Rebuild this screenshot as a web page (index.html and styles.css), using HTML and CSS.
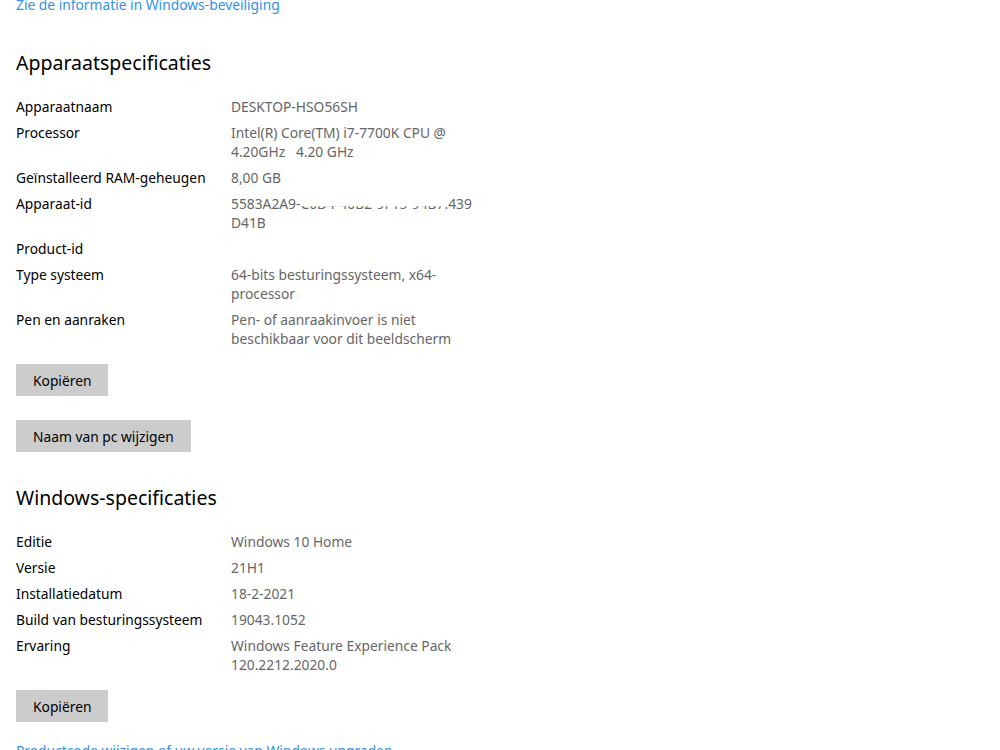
FILE: index.html
```html
<!DOCTYPE html>
<html lang="nl">
<head>
    <meta charset="UTF-8">
    <title>Info</title>
    <link rel="stylesheet" href="styles.css">
</head>
<body>
    <div class="page">
        <a class="link" href="#">Zie de informatie in Windows-beveiliging</a>

        <h2>Apparaatspecificaties</h2>
        <div class="specs">
            <div class="label">Apparaatnaam</div>
            <div class="value">DESKTOP-HSO56SH</div>
            <div class="label">Processor</div>
            <div class="value">Intel(R) Core(TM) i7-7700K CPU @<br>4.20GHz&nbsp;&nbsp;&nbsp;4.20 GHz</div>
            <div class="label">Geïnstalleerd RAM-geheugen</div>
            <div class="value">8,00 GB</div>
            <div class="label">Apparaat-id</div>
            <div class="value">5583A2A9-<span class="hidden">C0D4-40B2-9F15-94B7</span>.439<br>D41B</div>
            <div class="label">Product-id</div>
            <div class="value"><span class="hidden gone">00330-80000-00000-AA622</span></div>
            <div class="label">Type systeem</div>
            <div class="value">64-bits besturingssysteem, x64-<br>processor</div>
            <div class="label">Pen en aanraken</div>
            <div class="value">Pen- of aanraakinvoer is niet<br>beschikbaar voor dit beeldscherm</div>
        </div>
        <button class="btn">Kopiëren</button>
        <button class="btn">Naam van pc wijzigen</button>

        <h2>Windows-specificaties</h2>
        <div class="specs">
            <div class="label">Editie</div>
            <div class="value">Windows 10 Home</div>
            <div class="label">Versie</div>
            <div class="value">21H1</div>
            <div class="label">Installatiedatum</div>
            <div class="value">18-2-2021</div>
            <div class="label">Build van besturingssysteem</div>
            <div class="value">19043.1052</div>
            <div class="label">Ervaring</div>
            <div class="value">Windows Feature Experience Pack<br>120.2212.2020.0</div>
        </div>
        <button class="btn">Kopiëren</button>

        <a class="link" href="#">Productcode wijzigen of uw versie van Windows upgraden</a>
    </div>
</body>
</html>
```

FILE: styles.css
```css
* {
    padding: 0;
    margin: 0;
    box-sizing: border-box;
}

body {
    background: #fff;
    color: #000;
    font-family: 'Noto Sans', sans-serif;
    font-size: 13.8px;
    overflow: hidden;
}

.page {
    display: flex;
    flex-direction: column;
    align-items: flex-start;
    padding: 0 16px;
    margin-top: -5px;
}

.link {
    color: #3390e6;
    text-decoration: none;
    line-height: 20px;
}

h2 {
    font-weight: normal;
    font-size: 19.5px;
    line-height: 28px;
    margin-top: 34px;
    margin-bottom: 20px;
}

.btn + h2 {
    margin-top: 32px;
}

.specs {
    display: grid;
    grid-template-columns: 215px 250px;
    row-gap: 7px;
    line-height: 19px;
}

.value {
    color: #666;
}

.hidden {
    clip-path: inset(65% 0 0 0);
}

.hidden.gone {
    display: inline-block;
    clip-path: inset(86% 0 0 0);
    color: #aaa;
}

.btn {
    font-family: inherit;
    font-size: 13.8px;
    color: #000;
    background: #ccc;
    border: none;
    height: 32px;
    padding: 0 17px;
    margin-top: 16px;
}

.btn + .btn {
    margin-top: 24px;
}

.btn + .link {
    margin-top: 19px;
}
```
